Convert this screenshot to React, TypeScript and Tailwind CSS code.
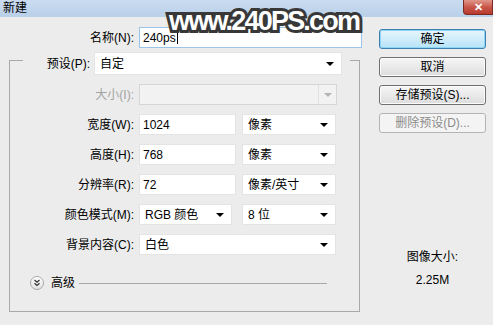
import React from "react";

const Arrow = ({ gray }: { gray?: boolean }) => (
  <svg width="8" height="4" viewBox="0 0 8 4" className="shrink-0">
    <polygon points="0,0 8,0 4,4" fill={gray ? "#b5b5b5" : "#000"} />
  </svg>
);

function Select({ w, value }: { w: string; value: string }) {
  return (
    <div className={`${w} h-full bg-white border border-[#e4e4e4] flex items-center justify-between pl-[5px] pr-[7px]`}>
      <span>{value}</span>
      <Arrow />
    </div>
  );
}

function Row({ label, children, gray }: { label: string; children: React.ReactNode; gray?: boolean }) {
  return (
    <div className="mt-[9px] flex items-center h-[21px]">
      <div className={`w-[124px] text-right ${gray ? "text-[#a3a3a3]" : ""}`}>{label}</div>
      <div className="ml-[5px] flex h-full">{children}</div>
    </div>
  );
}

function Btn({ label, kind }: { label: string; kind?: "default" | "disabled" }) {
  if (kind === "default")
    return (
      <div className="h-[20px] rounded-[3px] border border-[#3c7fb1] bg-gradient-to-b from-[#e8f6fd] to-[#b6e3f8] shadow-[inset_0_0_0_1px_#8fd6f5] flex items-center justify-center">
        {label}
      </div>
    );
  if (kind === "disabled")
    return (
      <div className="h-[20px] rounded-[3px] border border-[#b4b4b4] bg-[#f4f4f4] text-[#8c8c8c] flex items-center justify-center">
        {label}
      </div>
    );
  return (
    <div className="h-[20px] rounded-[3px] border border-[#707070] bg-gradient-to-b from-[#f6f6f6] to-[#dddddd] shadow-[inset_0_0_0_1px_#fcfcfc] flex items-center justify-center">
      {label}
    </div>
  );
}

export default function App() {
  return (
    <div className="w-[493px] h-[325px] bg-[#ececec] relative overflow-hidden text-[12px] text-black font-['Liberation_Sans','Noto_Sans_CJK_SC',sans-serif]">
      <div className="h-[17px] bg-gradient-to-b from-[#cadcf0] to-[#b9d0e9] flex justify-between">
        <span className="pl-[3px] leading-[17px]">新建</span>
        <div className="w-[30px] h-[15px] rounded-bl-[4px] border border-t-0 border-[#7a2a22] bg-gradient-to-b from-[#e0968a] via-[#c8574a] to-[#b8392c] flex items-center justify-center text-white text-[11px] font-bold">
          ✕
        </div>
      </div>

      <div className="flex">
        <div className="w-[370px]">
          <div className="mt-[10px] flex items-center h-[21px]">
            <div className="w-[134px] text-right">名称(N):</div>
            <div className="ml-[5px] w-[223px] h-full bg-white border border-[#9cc3e8] flex items-center pl-[3px]">
              240ps<span className="ml-[1px] w-px h-[13px] bg-black" />
            </div>
          </div>

          <div className="mt-[12px] ml-[9px] w-[351px] h-[252px] border border-[#a9a9a9]">
            <div className="-mt-[9px] ml-[13px] w-[327px] h-[23px] bg-[#ececec] flex items-center">
              <div className="w-[67px] text-right">预设(P):</div>
              <div className="ml-[4px] h-full">
                <Select w="w-[248px]" value="自定" />
              </div>
            </div>

            <Row label="大小(I):" gray>
              <div className="w-[198px] h-full bg-[#f2f2f2] border border-[#d6d6d6] flex">
                <div className="flex-1" />
                <div className="w-[18px] border-l border-[#e0e0e0] flex items-center justify-center">
                  <Arrow gray />
                </div>
              </div>
            </Row>

            <Row label="宽度(W):">
              <div className="w-[97px] bg-white border border-[#e4e4e4] flex items-center pl-[3px]">1024</div>
              <div className="ml-[6px] h-full"><Select w="w-[94px]" value="像素" /></div>
            </Row>
            <Row label="高度(H):">
              <div className="w-[97px] bg-white border border-[#e4e4e4] flex items-center pl-[3px]">768</div>
              <div className="ml-[6px] h-full"><Select w="w-[94px]" value="像素" /></div>
            </Row>
            <Row label="分辨率(R):">
              <div className="w-[97px] bg-white border border-[#e4e4e4] flex items-center pl-[3px]">72</div>
              <div className="ml-[6px] h-full"><Select w="w-[94px]" value="像素/英寸" /></div>
            </Row>
            <Row label="颜色模式(M):">
              <Select w="w-[93px]" value="RGB 颜色" />
              <div className="ml-[10px] h-full"><Select w="w-[94px]" value="8 位" /></div>
            </Row>
            <Row label="背景内容(C):">
              <Select w="w-[197px]" value="白色" />
            </Row>

            <div className="mt-[21px] ml-[20px] mr-[32px] flex items-center h-[14px]">
              <div className="w-[14px] h-[14px] rounded-full border border-[#a8a8a8] bg-gradient-to-b from-white to-[#e2e2e2] flex items-center justify-center">
                <svg width="8" height="8" viewBox="0 0 8 8">
                  <polyline points="1.5,1 4,3.2 6.5,1" fill="none" stroke="#333" strokeWidth="1.3" />
                  <polyline points="1.5,4.3 4,6.5 6.5,4.3" fill="none" stroke="#333" strokeWidth="1.3" />
                </svg>
              </div>
              <span className="ml-[7px]">高级</span>
              <div className="ml-[4px] flex-1 h-px bg-[#a8a8a8]" />
            </div>
          </div>
        </div>

        <div className="ml-[9px] w-[107px] mt-[12px] flex flex-col">
          <div className="flex flex-col gap-[8px]">
            <Btn label="确定" kind="default" />
            <Btn label="取消" />
            <Btn label="存储预设(S)..." />
            <Btn label="删除预设(D)..." kind="disabled" />
          </div>
          <div className="mt-[117px] text-center leading-[15px]">图像大小:</div>
          <div className="mt-[8px] text-center leading-[15px]">2.25M</div>
        </div>
      </div>

      <div className="absolute left-[169px] top-[6px] text-[27px] leading-[30px] font-bold tracking-[-1.8px] text-white [-webkit-text-stroke:6px_#383838] [paint-order:stroke_fill] font-['Liberation_Sans',sans-serif]">
        www.240PS.com
      </div>
    </div>
  );
}
